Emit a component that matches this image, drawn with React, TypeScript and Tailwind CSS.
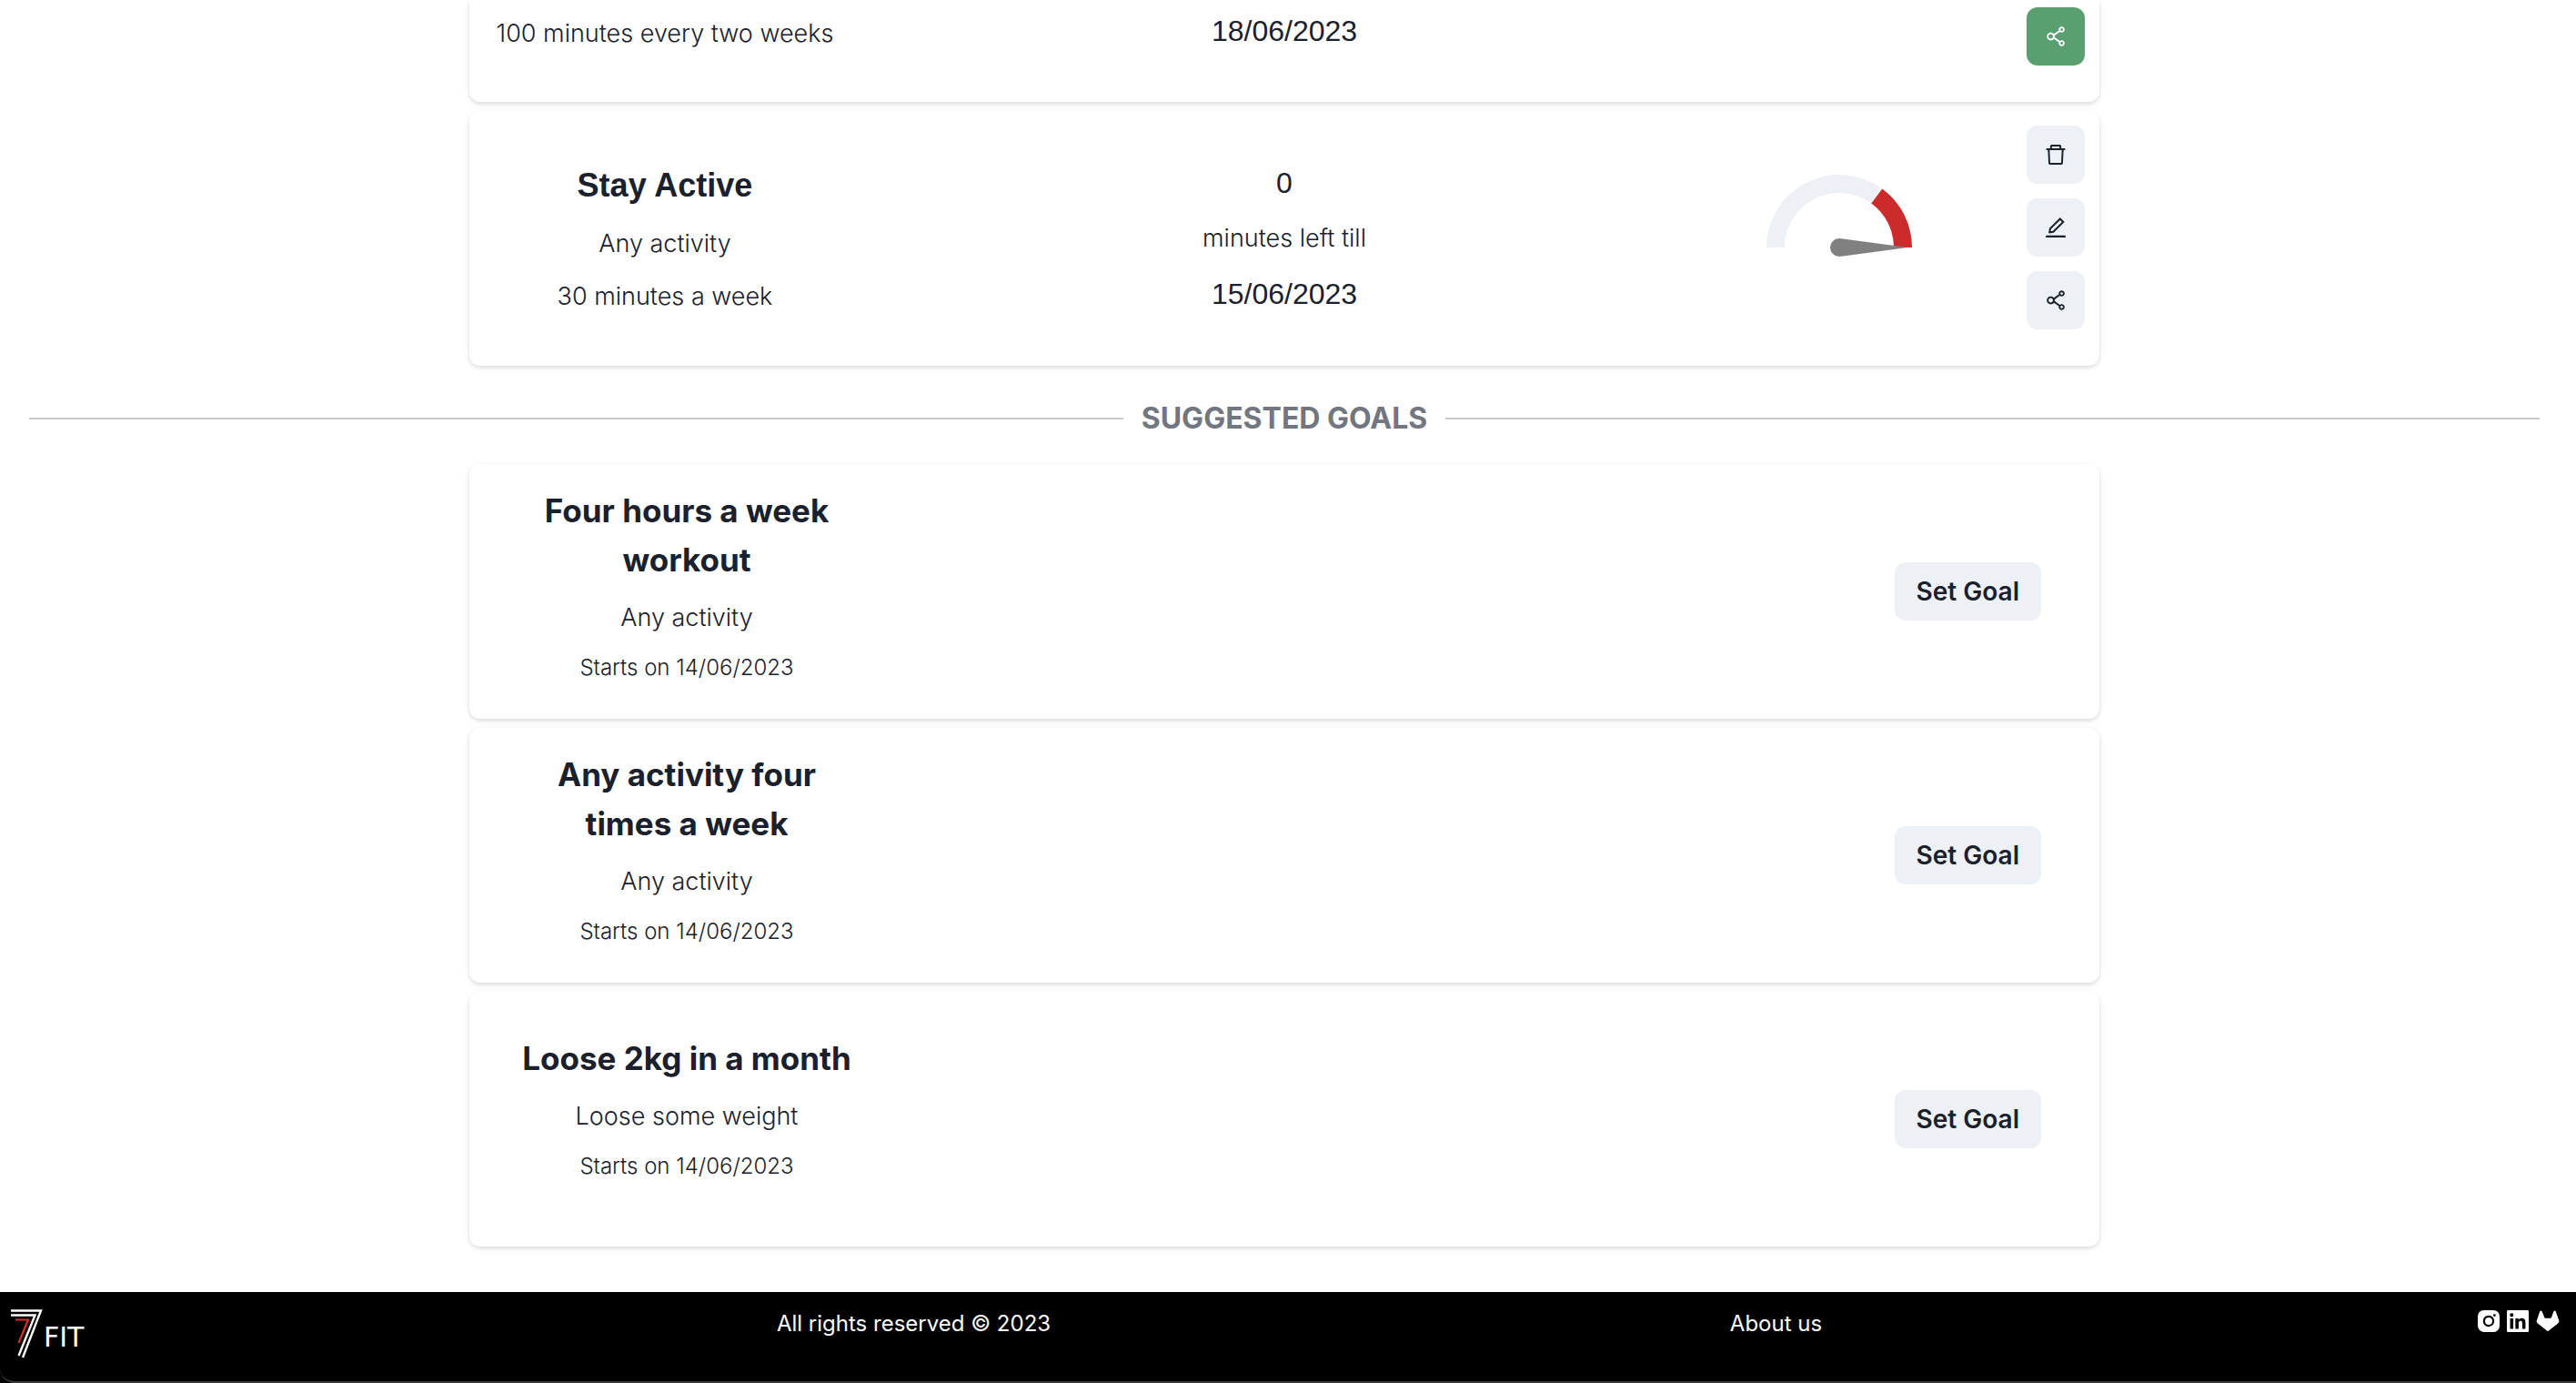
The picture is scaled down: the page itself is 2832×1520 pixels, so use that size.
import type { ReactNode } from "react";
import { AiOutlineDelete, AiOutlineEdit, AiOutlineShareAlt } from "react-icons/ai";
import { BiLogoInstagramAlt, BiLogoLinkedinSquare } from "react-icons/bi";

const suggestedGoals = [
  { title: "Four hours a week workout", activity: "Any activity", starts: "14/06/2023" },
  { title: "Any activity four times a week", activity: "Any activity", starts: "14/06/2023" },
  { title: "Loose 2kg in a month", activity: "Loose some weight", starts: "14/06/2023" },
];

function IconButton({ label, active = false, children }: { label: string; active?: boolean; children: ReactNode }) {
  return (
    <button
      type="button"
      aria-label={label}
      className={
        active
          ? "flex size-16 items-center justify-center rounded-xl bg-[#5a9f6f] text-[28px] text-white"
          : "flex size-16 items-center justify-center rounded-xl bg-[#edf1f6] text-[28px] text-[#1a202c]"
      }
    >
      {children}
    </button>
  );
}

function Gauge() {
  return (
    <svg viewBox="0 0 160 90" className="w-40" role="img" aria-label="Goal progress">
      <path d="M0 80A80 80 0 0 1 127.3 15.5L115.3 31.6A60 60 0 0 0 20 80Z" fill="#edf1f6" />
      <path d="M127.3 15.5A80 80 0 0 1 160 80H140A60 60 0 0 0 115.3 31.6Z" fill="#cc2b2b" />
      <path d="M80 70A10 10 0 0 0 80 90L155 80Z" fill="#808080" />
    </svg>
  );
}

function Logo() {
  return (
    <a href="#home" aria-label="7 FIT" className="flex text-white">
      <svg viewBox="0 0 36 56" className="h-14 w-9" fill="none">
        <path d="M0 2.5H33L13 54" stroke="#fff" strokeWidth="2.4" />
        <path d="M0 7.5H26.5L8.5 52" stroke="#fff" strokeWidth="2.4" />
        <path d="M5 12.5H19L8.5 38" stroke="#d3302a" strokeWidth="2.2" />
      </svg>
      <span className="mt-4 font-['DejaVu_Sans',sans-serif] text-[30px] leading-8">FIT</span>
    </a>
  );
}

function GitlabIcon() {
  return (
    <svg viewBox="0 0 32 32" className="size-8" fill="currentColor">
      <path d="M9.3 4.6Q10.3 4.6 10.8 5.8L13.6 12.8H20.6L23.3 5.8Q23.8 4.6 24.8 4.6Q25.7 4.8 26 6L29.3 15.4Q29.7 17 28.5 18.2L17 27.3L5.6 18.2Q4.4 17 4.8 15.4L8 6Q8.4 4.8 9.3 4.6Z" />
    </svg>
  );
}

export default function App() {
  return (
    <div className="bg-white font-[Inter,sans-serif] text-[#1a202c]">
      <main className="mb-[50px] pr-2">
        <section aria-label="Your goals" className="mx-auto flex max-w-[1792px] flex-col gap-2.5">
          <article className="grid grid-cols-[1fr_auto_1fr] rounded-b-xl pb-10 shadow-[0_2px_6px_rgba(0,0,0,0.1),0_2px_4px_rgba(0,0,0,0.06)]">
            <p className="ml-7 mt-4 w-[374px] whitespace-nowrap text-center text-[27px] font-light leading-[42px]">
              100 minutes every two weeks
            </p>
            <p className="mt-2.5 font-['Liberation_Sans',Arial,sans-serif] text-[32px] leading-[48px]">18/06/2023</p>
            <div className="mr-4 mt-2 flex justify-end">
              <IconButton label="Share goal" active>
                <AiOutlineShareAlt />
              </IconButton>
            </div>
          </article>

          <article className="grid min-h-[280px] grid-cols-[1fr_auto_1fr] items-center rounded-xl shadow-[0_2px_6px_rgba(0,0,0,0.1),0_2px_4px_rgba(0,0,0,0.06)]">
            <div className="ml-7 flex w-[374px] flex-col gap-4 text-center text-[27px] font-light leading-[42px]">
              <h3 className="font-['Liberation_Sans',Arial,sans-serif] text-[36px] font-bold leading-[54px]">Stay Active</h3>
              <p>Any activity</p>
              <p>30 minutes a week</p>
            </div>
            <div className="flex flex-col gap-4 text-center font-['Liberation_Sans',Arial,sans-serif] text-[32px] leading-[48px]">
              <p>0</p>
              <p className="font-[Inter,sans-serif] text-[27px] font-light leading-[42px]">minutes left till</p>
              <p>15/06/2023</p>
            </div>
            <div className="mr-4 flex items-start justify-end gap-[126px] self-start pt-4">
              <div className="mt-[54px]">
                <Gauge />
              </div>
              <div className="flex flex-col gap-4">
                <IconButton label="Delete goal">
                  <AiOutlineDelete />
                </IconButton>
                <IconButton label="Edit goal">
                  <AiOutlineEdit />
                </IconButton>
                <IconButton label="Share goal">
                  <AiOutlineShareAlt />
                </IconButton>
              </div>
            </div>
          </article>
        </section>

        <div className="mb-[26px] mt-[34px] flex items-center gap-5 px-8">
          <span className="h-0.5 flex-1 bg-[#c9c9cb]" />
          <h2 className="text-[32px] font-bold leading-[48px] text-[#717680]">SUGGESTED GOALS</h2>
          <span className="h-0.5 flex-1 bg-[#c9c9cb]" />
        </div>

        <section aria-label="Suggested goals" className="mx-auto flex max-w-[1792px] flex-col gap-2.5">
          {suggestedGoals.map((goal) => (
            <article
              key={goal.title}
              className="flex min-h-[280px] items-center justify-between rounded-xl pl-14 pr-16 shadow-[0_2px_6px_rgba(0,0,0,0.1),0_2px_4px_rgba(0,0,0,0.06)]"
            >
              <div className="mb-3.5 mt-6 flex min-h-[232px] w-[366px] flex-col justify-center gap-4 self-start pb-6 text-center font-light">
                <h3 className="text-[35px] font-bold leading-[54px]">{goal.title}</h3>
                <p className="text-[27px] leading-[42px]">{goal.activity}</p>
                <p className="text-[24px] leading-[36px]">Starts on {goal.starts}</p>
              </div>
              <button type="button" className="h-16 rounded-xl bg-[#edf1f6] px-6 text-[28px] font-semibold">
                Set Goal
              </button>
            </article>
          ))}
        </section>
      </main>

      <div className="bg-black">
        <footer className="grid h-[100px] grid-cols-[532fr_945fr_951fr_404fr] items-start rounded-bl-2xl border-b-2 border-[#3a3a3a] pt-4 text-[24px] leading-[38px] text-white">
          <div className="pl-3 pt-0.5">
            <Logo />
          </div>
          <p className="text-center">All rights reserved © 2023</p>
          <a href="#about" className="justify-self-center">
            About us
          </a>
          <div className="flex justify-end pr-4 text-[32px]">
            <a href="#instagram" aria-label="Instagram">
              <BiLogoInstagramAlt />
            </a>
            <a href="#linkedin" aria-label="LinkedIn">
              <BiLogoLinkedinSquare />
            </a>
            <a href="#gitlab" aria-label="GitLab">
              <GitlabIcon />
            </a>
          </div>
        </footer>
      </div>
    </div>
  );
}
